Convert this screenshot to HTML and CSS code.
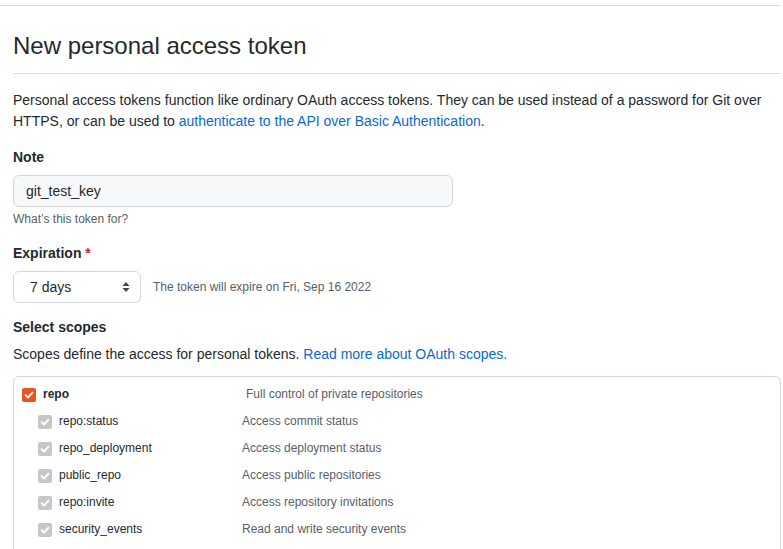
FILE: index.html
```html
<!DOCTYPE html>
<html>
<head>
<meta charset="utf-8">
<link rel="stylesheet" href="styles.css">
</head>
<body>
<div class="page">
  <div class="topline"></div>
  <div class="content">
    <h2 class="subhead">New personal access token</h2>
    <p class="intro">Personal access tokens function like ordinary OAuth access tokens. They can be used instead of a password for Git over HTTPS, or can be used to <a href="#">authenticate to the API over Basic Authentication</a>.</p>

    <div class="field">
      <label class="label">Note</label>
      <div class="input">git_test_key</div>
      <div class="note">What’s this token for?</div>
    </div>

    <div class="field">
      <label class="label">Expiration <span class="req">*</span></label>
      <div class="exp-row">
        <div class="select">
          <span>7 days</span>
          <svg class="arrows" width="8" height="12" viewBox="0 0 8 12"><path d="M4 1 L7.5 5 H0.5 Z M4 11 L7.5 7 H0.5 Z" fill="#444"/></svg>
        </div>
        <span class="exp-note">The token will expire on Fri, Sep 16 2022</span>
      </div>
    </div>

    <h3 class="label scopes-title">Select scopes</h3>
    <p class="scopes-desc">Scopes define the access for personal tokens. <a href="#">Read more about OAuth scopes.</a></p>

    <div class="scope-box">
      <div class="row main">
        <span class="cb on"><svg width="14" height="14" viewBox="0 0 14 14"><path d="M3.6 7.1 L6 9.5 L10.5 4.7" fill="none" stroke="#fff" stroke-width="1.9" stroke-linecap="round" stroke-linejoin="round"/></svg></span>
        <span class="name bold">repo</span>
        <span class="desc">Full control of private repositories</span>
      </div>
      <div class="row sub">
        <span class="cb off"><svg width="14" height="14" viewBox="0 0 14 14"><path d="M3.6 7.1 L6 9.5 L10.5 4.7" fill="none" stroke="#fff" stroke-width="1.9" stroke-linecap="round" stroke-linejoin="round"/></svg></span>
        <span class="name">repo:status</span>
        <span class="desc">Access commit status</span>
      </div>
      <div class="row sub">
        <span class="cb off"><svg width="14" height="14" viewBox="0 0 14 14"><path d="M3.6 7.1 L6 9.5 L10.5 4.7" fill="none" stroke="#fff" stroke-width="1.9" stroke-linecap="round" stroke-linejoin="round"/></svg></span>
        <span class="name">repo_deployment</span>
        <span class="desc">Access deployment status</span>
      </div>
      <div class="row sub">
        <span class="cb off"><svg width="14" height="14" viewBox="0 0 14 14"><path d="M3.6 7.1 L6 9.5 L10.5 4.7" fill="none" stroke="#fff" stroke-width="1.9" stroke-linecap="round" stroke-linejoin="round"/></svg></span>
        <span class="name">public_repo</span>
        <span class="desc">Access public repositories</span>
      </div>
      <div class="row sub">
        <span class="cb off"><svg width="14" height="14" viewBox="0 0 14 14"><path d="M3.6 7.1 L6 9.5 L10.5 4.7" fill="none" stroke="#fff" stroke-width="1.9" stroke-linecap="round" stroke-linejoin="round"/></svg></span>
        <span class="name">repo:invite</span>
        <span class="desc">Access repository invitations</span>
      </div>
      <div class="row sub">
        <span class="cb off"><svg width="14" height="14" viewBox="0 0 14 14"><path d="M3.6 7.1 L6 9.5 L10.5 4.7" fill="none" stroke="#fff" stroke-width="1.9" stroke-linecap="round" stroke-linejoin="round"/></svg></span>
        <span class="name">security_events</span>
        <span class="desc">Read and write security events</span>
      </div>
    </div>
  </div>
</div>
</body>
</html>
```

FILE: styles.css
```css
* { box-sizing: border-box; }
html, body { margin: 0; padding: 0; background: #fff; }
body {
  font-family: "Liberation Sans", Arial, sans-serif;
  font-size: 14px;
  line-height: 21px;
  color: #24292f;
}
a { color: #0969da; text-decoration: none; }
.page { width: 781px; overflow: hidden; }
.topline { height: 6px; border-bottom: 1px solid #d8dee4; }
.content { padding: 0 0 0 13px; }
.subhead {
  margin: 22px 0 0;
  padding: 0 0 9px;
  font-size: 24px;
  line-height: 36px;
  font-weight: 400;
  border-bottom: 1px solid #d8dee4;
}
.intro { margin: 16px 0 0; padding-right: 16px; }
.field { margin-top: 15px; }
.label { display: block; font-weight: 700; font-size: 14px; margin: 0; }
.input {
  margin-top: 7px;
  width: 440px;
  height: 32px;
  padding: 0 12px;
  background: #f6f8fa;
  border: 1px solid #d0d7de;
  border-radius: 6px;
  line-height: 30px;
}
.note { font-size: 12px; line-height: 18px; color: #57606a; margin-top: 3px; }
.req { color: #cf222e; }
.exp-row { display: flex; align-items: center; gap: 12px; margin-top: 7px; }
.select {
  width: 128px;
  height: 32px;
  border: 1px solid #d0d7de;
  border-radius: 6px;
  display: flex;
  align-items: center;
  justify-content: space-between;
  padding: 0 10px 0 16px;
}
.exp-note { font-size: 12px; color: #57606a; }
.scopes-title { margin-top: 14px; }
.scopes-desc { margin: 6px 0 0; }
.scope-box {
  margin-top: 11px;
  border: 1px solid #d0d7de;
  border-radius: 6px;
  padding: 4px 8px 20px;
}
.row { display: flex; align-items: center; height: 27px; font-size: 12px; }
.row.sub { padding-left: 16px; }
.cb {
  width: 14px; height: 14px;
  border-radius: 2px;
  display: inline-flex;
  flex: none;
}
.cb.on { background: #e95420; }
.cb.off { background: #c7c7ca; }
.name { margin-left: 7px; color: #24292f; }
.bold { font-weight: 700; font-size: 12px; }
.main .name { width: 203px; }
.sub .name { width: 183px; }
.desc { color: #57606a; }
```
